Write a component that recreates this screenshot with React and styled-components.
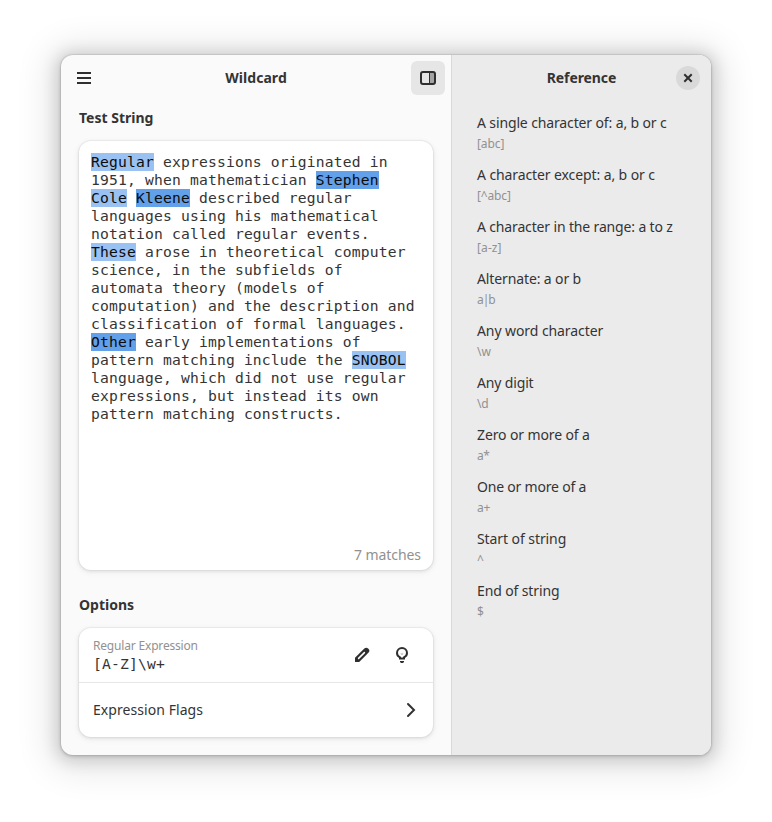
import React from "react";
import styled, { createGlobalStyle, css } from "styled-components";

const Global = createGlobalStyle`
  * { box-sizing: border-box; }
  body { margin: 0; background: #fff; color: #343434; font-family: "Noto Sans", sans-serif; font-size: 14px; }
`;
const Desktop = styled.main`
  width: 772px; height: 822px; padding: 55px 61px 67px; overflow: hidden;
`;
const Window = styled.div`
  display: flex; width: 650px; height: 700px; border-radius: 12px;
  background: #fafafa;
  box-shadow: 0 0 0 1px rgba(0,0,0,.05), 0 1px 3px 1px rgba(0,0,0,.13), 0 2px 16px 5px rgba(0,0,0,.14), 0 3px 34px 14px rgba(0,0,0,.09);
`;
const Content = styled.section`
  width: 390px; display: flex; flex-direction: column;
`;
const Sidebar = styled.aside`
  width: 260px; background: #ebebeb; border-left: 1px solid #d9d9d9;
  border-radius: 0 12px 12px 0;
`;
const Header = styled.header`
  height: 46px; display: grid; grid-template-columns: 34px 1fr 34px; align-items: center;
  padding: 0 6px;
`;
const Line = styled.span`
  display: block; width: max-content; white-space: pre;
  line-height: 20px; letter-spacing: ${p => p.$track || 0}px;
`;
const Title = styled(Line)`
  font-weight: 700; justify-self: center; grid-column: 2;
`;
const IconButton = styled.button`
  width: 34px; height: 34px; padding: 0; border: 0; border-radius: 6px;
  display: grid; place-items: center; color: #2f2f2f;
  background: ${p => (p.$active ? "#e6e6e6" : "transparent")};
  svg { display: block; width: 16px; height: 16px; }
`;
const CloseButton = styled(IconButton)`
  width: 24px; height: 24px; border-radius: 50%; background: #d9d9d9; justify-self: center;
`;
const Body = styled.div`
  padding: 7px 18px 0; display: flex; flex-direction: column;
`;
const Heading = styled(Line)`
  font-weight: 700; margin-bottom: ${p => p.$gap}px;
`;
const cardLook = css`
  background: #fff; border-radius: 12px;
  box-shadow: 0 0 0 1px rgba(0,0,0,.03), 0 1px 3px 1px rgba(0,0,0,.07), 0 2px 6px 2px rgba(0,0,0,.03);
`;
const Editor = styled.div`
  ${cardLook}
  height: 429px; padding: 12px 12px 5px; display: flex; flex-direction: column;
  justify-content: space-between; margin-bottom: 25px;
`;
const Mono = styled.p`
  margin: 0; font: 14.667px/18px "DejaVu Sans Mono", monospace; letter-spacing: .169px; white-space: pre;
`;
const Mark = styled.span`
  display: inline-block; height: 18px; vertical-align: top; color: #0c0c0c;
  background: ${p => (p.$strong ? "#62a0ea" : "#99c1f1")};
`;
const Count = styled(Line)`
  color: #919191; align-self: flex-end;
`;
const List = styled.div`
  ${cardLook}
  height: 109px;
`;
const Row = styled.div`
  height: ${p => p.$h}px; padding: 0 14px; display: flex; align-items: center; justify-content: space-between;
  & + & { border-top: 1px solid #e6e6e6; }
`;
const Stack = styled.div` padding-bottom: 1px; `;
const Small = styled(Line)`
  font-size: 12px; line-height: 18px; color: #919191;
`;
const Actions = styled.div` display: flex; gap: 6px; `;
const Chevron = styled.svg` width: 16px; height: 16px; display: block; margin-right: 1px; `;
const Entries = styled.dl`
  margin: 0; padding: 12px 0 0 25px;
`;
const Entry = styled.div`
  height: 52px; display: flex; flex-direction: column; gap: 2px;
`;

const text = [
  ["Regular", false, " expressions originated in\n1951, when mathematician "],
  ["Stephen", true, "\n"],
  ["Cole", false, " "],
  ["Kleene", true, " described regular\nlanguages using his mathematical\nnotation called regular events.\n"],
  ["These", false, " arose in theoretical computer\nscience, in the subfields of\nautomata theory (models of\ncomputation) and the description and\nclassification of formal languages.\n"],
  ["Other", true, " early implementations of\npattern matching include the "],
  ["SNOBOL", false, "\nlanguage, which did not use regular\nexpressions, but instead its own\npattern matching constructs."],
];
const entries = [
  ["A single character of: a, b or c", "[abc]", -0.13, -0.1],
  ["A character except: a, b or c", "[^abc]", -0.1, -0.15],
  ["A character in the range: a to z", "[a-z]", -0.15, 0.1],
  ["Alternate: a or b", "a|b", -0.12, -1.1],
  ["Any word character", "\\w", -0.08, 0],
  ["Any digit", "\\d", -0.15, -0.3],
  ["Zero or more of a", "a*", -0.12, -0.5],
  ["One or more of a", "a+", -0.2, -0.3],
  ["Start of string", "^", -0.08, 0],
  ["End of string", "$", -0.12, 0],
];

const MenuIcon = () => (
  <svg viewBox="0 0 16 16" fill="currentColor"><path d="M1 2h14v2H1zM1 7h14v2H1zM1 12h14v2H1z" /></svg>
);
const SidebarIcon = () => (
  <svg viewBox="0 0 16 16"><path d="M10 3h4v10h-4z" fill="#a3a3a3" /><path d="M9 2h1v12H9z" fill="currentColor" /><rect x="1" y="2" width="14" height="12" rx="2" fill="none" stroke="currentColor" strokeWidth="2" /></svg>
);
const CloseIcon = () => (
  <svg viewBox="0 0 16 16" fill="none" stroke="currentColor" strokeWidth="2" strokeLinecap="square"><path d="M5 5l6 6M11 5l-6 6" /></svg>
);
const PencilIcon = () => (
  <svg viewBox="0 0 16 16" fill="none" strokeLinecap="round"><path d="M1 15v-4.200L10.300 1.600a2.900 2.900 0 0 1 4.100 4.100L5.200 15z" fill="currentColor" /><path d="M4.600 11.400l5.800-5.800" stroke="#fff" strokeWidth="1.5" /></svg>
);
const BulbIcon = () => (
  <svg viewBox="0 0 16 16"><path d="M6 11.500V10.400C4 9.500 3 7.900 3 6a5 5 0 0 1 10 0c0 1.900-1 3.500-3 4.400v1.100z" fill="none" stroke="currentColor" strokeWidth="2" /><path d="M6 14h4v.6L9.200 16H6.800L6 14.600z" fill="currentColor" /><path d="M6.300 6.400h3.400L8 8.100z" fill="#aaa" /></svg>
);

export default function App() {
  return (
    <>
      <Global />
      <Desktop>
        <Window>
          <Content>
            <Header>
              <IconButton aria-label="Menu"><MenuIcon /></IconButton>
              <Title $track={0.05}>Wildcard</Title>
              <IconButton $active aria-label="Reference"><SidebarIcon /></IconButton>
            </Header>
            <Body>
              <Heading $gap={13}>Test String</Heading>
              <Editor>
                <Mono>
                  {text.map(([word, strong, rest]) => (
                    <React.Fragment key={word}><Mark $strong={strong}>{word}</Mark>{rest}</React.Fragment>
                  ))}
                </Mono>
                <Count $track={-0.08}>7 matches</Count>
              </Editor>
              <Heading $gap={13}>Options</Heading>
              <List>
                <Row $h={54}>
                  <Stack><Small $track={-0.18}>Regular Expression</Small><Mono>{"[A-Z]\\w+"}</Mono></Stack>
                  <Actions>
                    <IconButton aria-label="Edit"><PencilIcon /></IconButton>
                    <IconButton aria-label="Hint"><BulbIcon /></IconButton>
                  </Actions>
                </Row>
                <Row $h={55}>
                  <Line $track={0.06}>Expression Flags</Line>
                  <Chevron viewBox="0 0 16 16" fill="none" stroke="#323232" strokeWidth="2" strokeLinecap="round"><path d="M6 2l6 6-6 6" /></Chevron>
                </Row>
              </List>
            </Body>
          </Content>
          <Sidebar>
            <Header>
              <Title $track={-0.1}>Reference</Title>
              <CloseButton aria-label="Close"><CloseIcon /></CloseButton>
            </Header>
            <Entries>
              {entries.map(([label, code, labelTrack, codeTrack]) => (
                <Entry key={label}><Line $track={labelTrack}>{label}</Line><Small $track={codeTrack}>{code}</Small></Entry>
              ))}
            </Entries>
          </Sidebar>
        </Window>
      </Desktop>
    </>
  );
}
